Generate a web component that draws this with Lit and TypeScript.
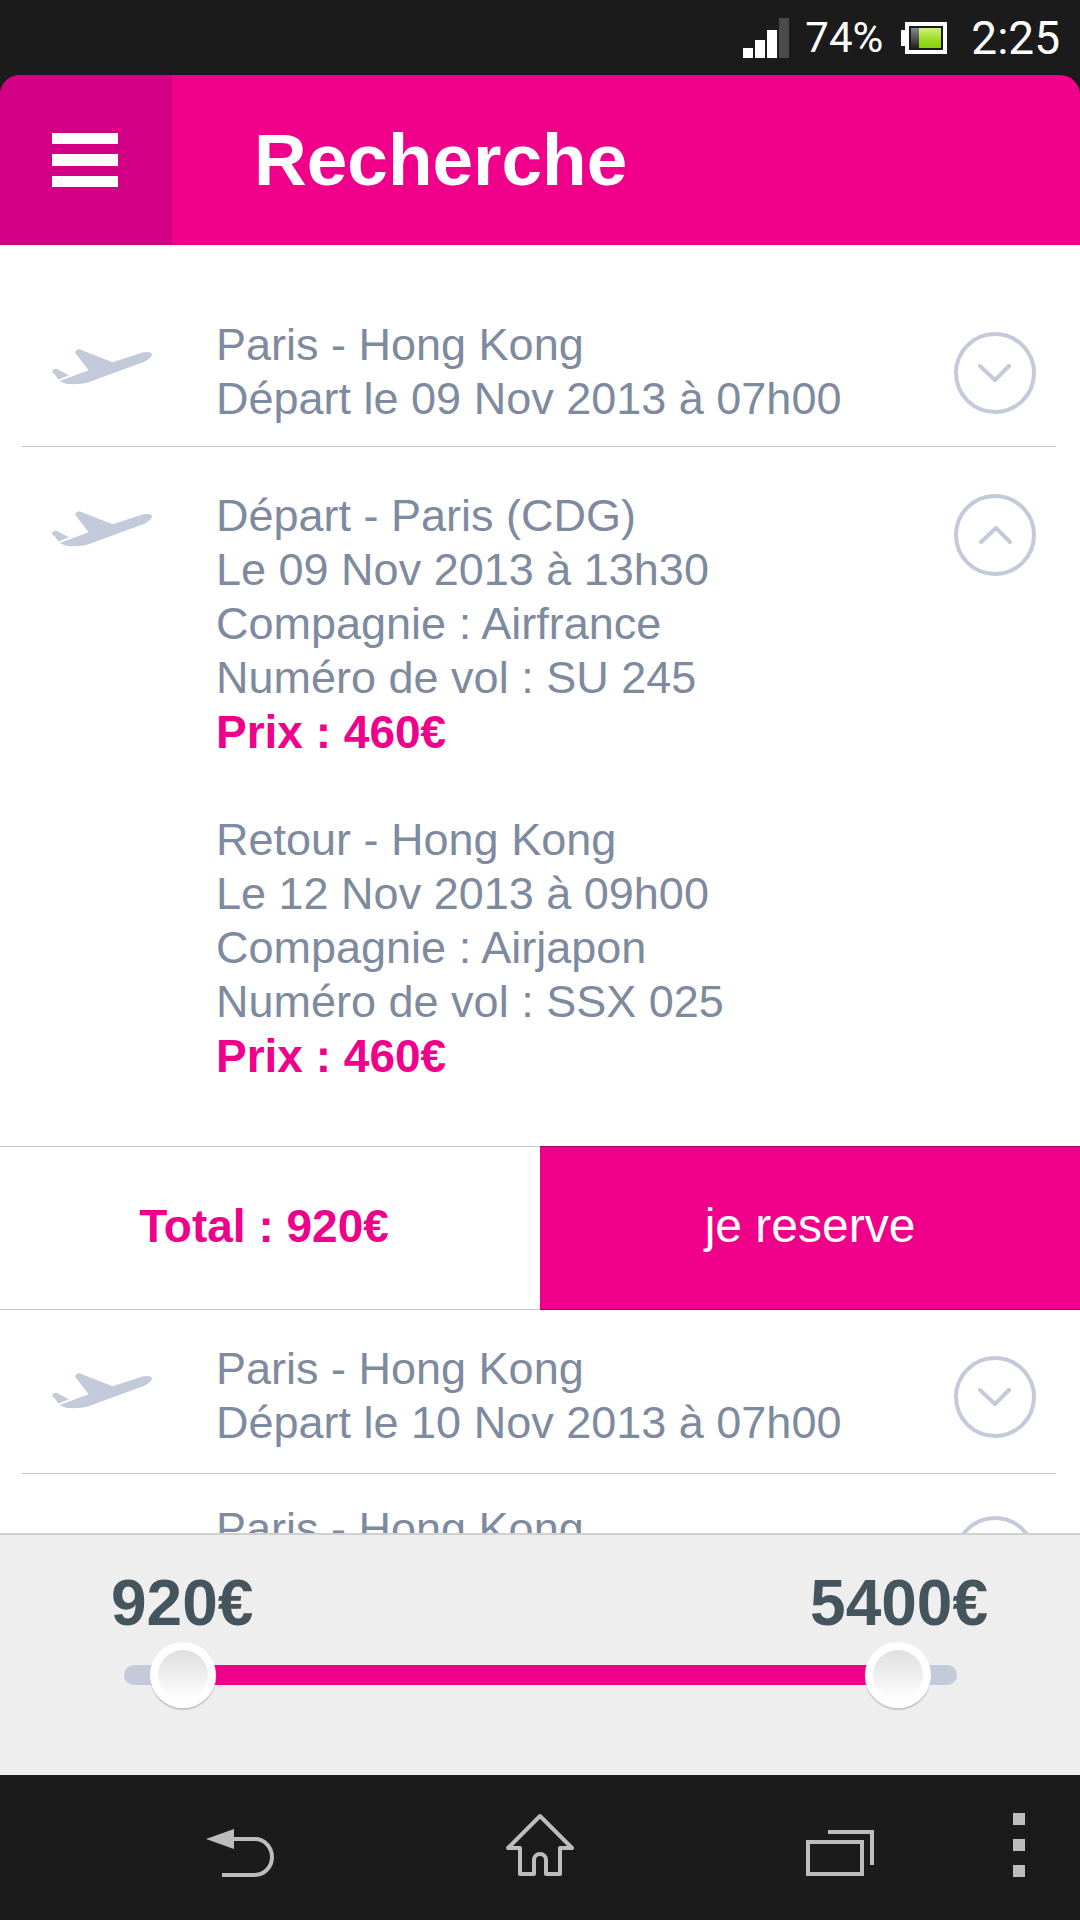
import { LitElement, html, css, svg, nothing } from "lit";
import { customElement, property, state } from "lit/decorators.js";

interface Leg {
  lines: string[];
  price?: string;
}

interface Trip {
  id: number;
  open: boolean;
  plane: boolean;
  legs: Leg[];
  total?: string;
}

const TRIPS: Trip[] = [
  { id: 1, open: false, plane: true, legs: [{ lines: ["Paris - Hong Kong", "Départ le 09 Nov 2013 à 07h00"] }] },
  {
    id: 2,
    open: true,
    plane: true,
    total: "920€",
    legs: [
      {
        lines: ["Départ - Paris (CDG)", "Le 09 Nov 2013 à 13h30", "Compagnie : Airfrance", "Numéro de vol : SU 245"],
        price: "460€",
      },
      {
        lines: ["Retour - Hong Kong", "Le 12 Nov 2013 à 09h00", "Compagnie : Airjapon", "Numéro de vol : SSX 025"],
        price: "460€",
      },
    ],
  },
  { id: 3, open: false, plane: true, legs: [{ lines: ["Paris - Hong Kong", "Départ le 10 Nov 2013 à 07h00"] }] },
  { id: 4, open: false, plane: false, legs: [{ lines: ["Paris - Hong Kong"] }] },
];

@customElement("status-bar")
class StatusBar extends LitElement {
  static styles = css`
    :host {
      display: flex;
      align-items: center;
      justify-content: flex-end;
      height: 75px;
      padding-right: 20px;
      box-sizing: border-box;
      background: #1b1b1b;
      color: #fff;
      font-family: Roboto, "Noto Sans", sans-serif;
      line-height: 48px;
    }
    svg {
      display: block;
    }
    .level {
      margin: 0 18px 0 16px;
      font-size: 42px;
    }
    .time {
      margin-left: 24px;
      font-size: 46px;
    }
  `;
  render() {
    return html`
      <svg width="46" height="40" viewBox="0 0 46 40" aria-hidden="true">
        <path fill="#fff" d="M0 30h10v10H0zM12 22h10v18H12zM24 12h10v28H24z" />
        <path fill="#4a4a4a" d="M36 0h10v40H36z" />
      </svg>
      <span class="level">74%</span>
      <svg width="46" height="32" viewBox="0 0 46 32" aria-hidden="true">
        <defs>
          <linearGradient id="used" x1="0" y1="0" x2="0" y2="1">
            <stop offset="0" stop-color="#8a8a86" />
            <stop offset="1" stop-color="#1b1b1b" />
          </linearGradient>
          <linearGradient id="left" x1="0" y1="0" x2="0" y2="1">
            <stop offset="0" stop-color="#d2f284" />
            <stop offset="0.5" stop-color="#a2de2c" />
            <stop offset="1" stop-color="#86d00c" />
          </linearGradient>
        </defs>
        <path fill="#fff" fill-rule="evenodd" d="M4 0h42v32H4v-8H0V8h4zM8 4v24h34V4z" />
        <path fill="url(#used)" d="M10 6h8v21h-8z" />
        <path fill="url(#left)" d="M18 6h22v20H18z" />
      </svg>
      <span class="time">2:25</span>
    `;
  }
}

@customElement("app-header")
class AppHeader extends LitElement {
  static styles = css`
    :host {
      display: block;
      background: #1b1b1b;
    }
    .bar {
      display: flex;
      align-items: stretch;
      height: 170px;
      overflow: hidden;
      border-radius: 20px 20px 0 0;
      background: #f0008a;
    }
    .menu {
      display: grid;
      place-items: center;
      width: 172px;
      padding: 0 1px 0 0;
      border: 0;
      border-right: 1px solid #c0007a;
      background: #d30086;
    }
    .title {
      align-self: center;
      margin: 0 0 0 82px;
      color: #fff;
      font-size: 73px;
      line-height: 84px;
      font-weight: 700;
    }
  `;
  render() {
    return html`
      <header class="bar">
        <button class="menu" type="button" aria-label="Menu">
          <svg width="66" height="54" viewBox="0 0 66 54" aria-hidden="true">
            <path fill="#fff" d="M0 0h66v11H0zM0 21h66v12H0zM0 43h66v11H0z" />
          </svg>
        </button>
        <h1 class="title">Recherche</h1>
      </header>
    `;
  }
}

@customElement("trip-row")
class TripRow extends LitElement {
  @property({ attribute: false }) trip!: Trip;

  static styles = css`
    :host {
      display: block;
    }
    .row {
      display: grid;
      grid-template-columns: 164px 1fr 82px;
      align-items: start;
      padding: 0 44px 0 52px;
    }
    .plane {
      display: block;
      margin-top: 31px;
    }
    .toggle {
      display: grid;
      place-items: center;
      width: 82px;
      height: 82px;
      margin-top: 14px;
      padding: 0;
      border: 4px solid #c3cada;
      border-radius: 50%;
      background: none;
    }
    .open .plane {
      margin-top: 22px;
    }
    .open .toggle {
      margin-top: 5px;
    }
    .leg {
      margin: 0;
      color: #7e8a9e;
      font-size: 45px;
      line-height: 54px;
    }
    .leg + .leg {
      margin-top: 54px;
    }
    .line {
      display: block;
    }
    .price {
      display: block;
      color: #f0008a;
      font-size: 46px;
      font-weight: 700;
    }
  `;

  private toggle() {
    this.dispatchEvent(new CustomEvent("trip-toggle", { detail: this.trip.id, bubbles: true, composed: true }));
  }

  render() {
    const { trip } = this;
    return html`
      <div class="row ${trip.open ? "open" : ""}">
        <div>
          ${trip.plane
            ? html`<svg class="plane" width="100" height="36" viewBox="0 0 100 36" aria-hidden="true">
                <path
                  fill="#c3cada"
                  d="M0 21.8Q1.6 19.6 4.6 19.8L17 26.2 6.5 30.6Q4 26 .4 23.6zM7.6 32 36.6 21.2 23 3.6Q24 .6 27.4 .2L60.7 13.2 88 4.2Q96.6 1.8 99.8 4.4 100.8 8.6 93 12.4L36 33.6Q28 36 14 34.8z"
                />
              </svg>`
            : nothing}
        </div>
        <div>
          ${trip.legs.map(
            (leg) => html`<p class="leg">
              ${leg.lines.map((line) => html`<span class="line">${line}</span>`)}${leg.price
                ? html`<strong class="price">Prix : ${leg.price}</strong>`
                : nothing}
            </p>`,
          )}
        </div>
        <button
          class="toggle"
          type="button"
          aria-label=${trip.open ? "Masquer le détail" : "Afficher le détail"}
          aria-expanded=${trip.open ? "true" : "false"}
          @click=${this.toggle}
        >
          <svg width="34" height="20" viewBox="0 0 34 20" aria-hidden="true">
            <path
              d=${trip.open ? "M3 17 18 3 32 17" : "M2 3 17 17 31 3"}
              fill="none"
              stroke="#c3cada"
              stroke-width="4"
              stroke-linecap="round"
              stroke-linejoin="round"
            />
          </svg>
        </button>
      </div>
    `;
  }
}

@customElement("price-range")
class PriceRange extends LitElement {
  @state() private low = 920;
  @state() private high = 5400;

  private readonly min = 760;
  private readonly max = 5560;

  static styles = css`
    :host {
      display: block;
      padding: 32px 0 67px;
      border-top: 2px solid #d0d0d0;
      background: #eee;
    }
    .values {
      display: flex;
      justify-content: space-between;
      padding: 0 92px 0 111px;
      color: #44555d;
      font-size: 64px;
      line-height: 72px;
      font-weight: 700;
    }
    .slider {
      display: grid;
      align-items: center;
      height: 66px;
      margin: 3px 123px 0 124px;
    }
    .track,
    .thumb {
      grid-area: 1 / 1;
    }
    .track {
      display: flex;
      height: 20px;
      padding: 0 33px;
      border-radius: 10px;
      background: #c3cada;
    }
    .fill {
      height: 20px;
      background: #f0008a;
    }
    .thumb {
      appearance: none;
      width: 100%;
      height: 66px;
      margin: 0;
      background: none;
      pointer-events: none;
    }
    .thumb::-webkit-slider-runnable-track {
      height: 66px;
      background: none;
    }
    .thumb::-webkit-slider-thumb {
      appearance: none;
      width: 66px;
      height: 66px;
      border: 8px solid transparent;
      border-radius: 50%;
      background: linear-gradient(#dfdfdf, #fff) padding-box, linear-gradient(#fff, #fff) border-box;
      box-shadow: 0 2px 1px #c4c4c4;
      pointer-events: auto;
    }
  `;

  private share(value: number) {
    return ((value - this.min) / (this.max - this.min)) * 100;
  }

  private onLow(e: Event) {
    this.low = Math.min(Number((e.target as HTMLInputElement).value), this.high);
  }

  private onHigh(e: Event) {
    this.high = Math.max(Number((e.target as HTMLInputElement).value), this.low);
  }

  render() {
    const from = this.share(this.low);
    const width = this.share(this.high) - from;
    return html`
      <div class="values">
        <label for="low">${this.low}€</label>
        <label for="high">${this.high}€</label>
      </div>
      <div class="slider">
        <div class="track">
          <div class="fill" style="margin-left:${from}%;width:${width}%"></div>
        </div>
        <input class="thumb" id="low" type="range" min=${this.min} max=${this.max} step="10" .value=${String(this.low)} @input=${this.onLow} />
        <input class="thumb" id="high" type="range" min=${this.min} max=${this.max} step="10" .value=${String(this.high)} @input=${this.onHigh} />
      </div>
    `;
  }
}

const NAV = [
  {
    label: "Retour",
    art: svg`<path fill="#bdbdbd" d="M0 36 28 26V46z"/><path fill="none" stroke="#bdbdbd" stroke-width="4" d="M27 36H49A17 18 0 0 1 49 72H16"/>`,
    box: "0 10 68 64",
  },
  {
    label: "Accueil",
    art: svg`<path fill="none" stroke="#bdbdbd" stroke-width="4" stroke-linejoin="round" d="M34 3 66 35H54V61H40V47A6 6 0 0 0 28 47V61H14V35H2z"/>`,
    box: "0 0 68 64",
  },
  {
    label: "Applications récentes",
    art: svg`<path fill="none" stroke="#bdbdbd" stroke-width="4" d="M2 29H56V61H2zM22 19H66V52"/>`,
    box: "0 0 68 64",
  },
  {
    label: "Plus d’options",
    art: svg`<path fill="#bdbdbd" d="M27 0h12v12H27zM27 26h12v12H27zM27 52h12v12H27z"/>`,
    box: "0 0 68 64",
  },
];

@customElement("system-nav")
class SystemNav extends LitElement {
  static styles = css`
    :host {
      display: block;
      background: #1b1b1b;
    }
    .nav {
      display: grid;
      grid-template-columns: 10fr 10fr 10fr 2fr;
      height: 145px;
      padding: 0 30px 5px 90px;
      box-sizing: border-box;
    }
    .key {
      display: grid;
      place-items: center;
      place-content: center;
      min-width: 0;
      padding: 0;
      border: 0;
      background: none;
    }
  `;
  render() {
    return html`
      <nav class="nav">
        ${NAV.map(
          (key) => html`<button class="key" type="button" aria-label=${key.label}>
            <svg width="68" height="64" viewBox=${key.box} aria-hidden="true">${key.art}</svg>
          </button>`,
        )}
      </nav>
    `;
  }
}

@customElement("app-root")
class AppRoot extends LitElement {
  @state() private trips = TRIPS;

  static styles = css`
    :host {
      display: flex;
      flex-direction: column;
      height: 100vh;
      overflow: hidden;
      background: #fff;
      font-family: "Liberation Sans", Arial, sans-serif;
    }
    .results {
      flex: 1;
      min-height: 0;
      overflow-y: auto;
      scrollbar-width: none;
    }
    .trip {
      margin: 0 24px 0 22px;
      padding: 28px 0 23px;
      border-bottom: 1px solid #c3c6ce;
    }
    .trip trip-row {
      margin: 0 -24px 0 -22px;
    }
    .trip:first-child {
      padding: 73px 0 20px;
    }
    .trip.open {
      padding: 42px 0 63px;
      border-bottom: 0;
    }
    .booking + .trip {
      padding-top: 32px;
    }
    .booking {
      display: grid;
      grid-template-columns: 1fr 1fr;
      height: 164px;
    }
    .total,
    .book {
      display: grid;
      place-items: center;
      padding: 0 0 5px;
      border: solid #c8c8c8;
      border-width: 1px 0;
      line-height: 54px;
    }
    .total {
      margin: 0;
      padding-right: 12px;
      color: #f0008a;
      font-size: 46px;
      font-weight: 700;
    }
    .book {
      border-color: #a80064;
      background: #f0008a;
      color: #fff;
      font-family: inherit;
      font-size: 48px;
    }
  `;

  private onToggle(e: CustomEvent<number>) {
    this.trips = this.trips.map((t) => (t.id === e.detail ? { ...t, open: !t.open } : t));
  }

  render() {
    return html`
      <status-bar></status-bar>
      <app-header></app-header>
      <main class="results" @trip-toggle=${this.onToggle}>
        ${this.trips.map(
          (trip) => html`
            <section class="trip ${trip.open ? "open" : ""}"><trip-row .trip=${trip}></trip-row></section>
            ${trip.open && trip.total
              ? html`<div class="booking">
                  <p class="total">Total : ${trip.total}</p>
                  <button class="book" type="button">je reserve</button>
                </div>`
              : nothing}
          `,
        )}
      </main>
      <price-range></price-range>
      <system-nav></system-nav>
    `;
  }
}
